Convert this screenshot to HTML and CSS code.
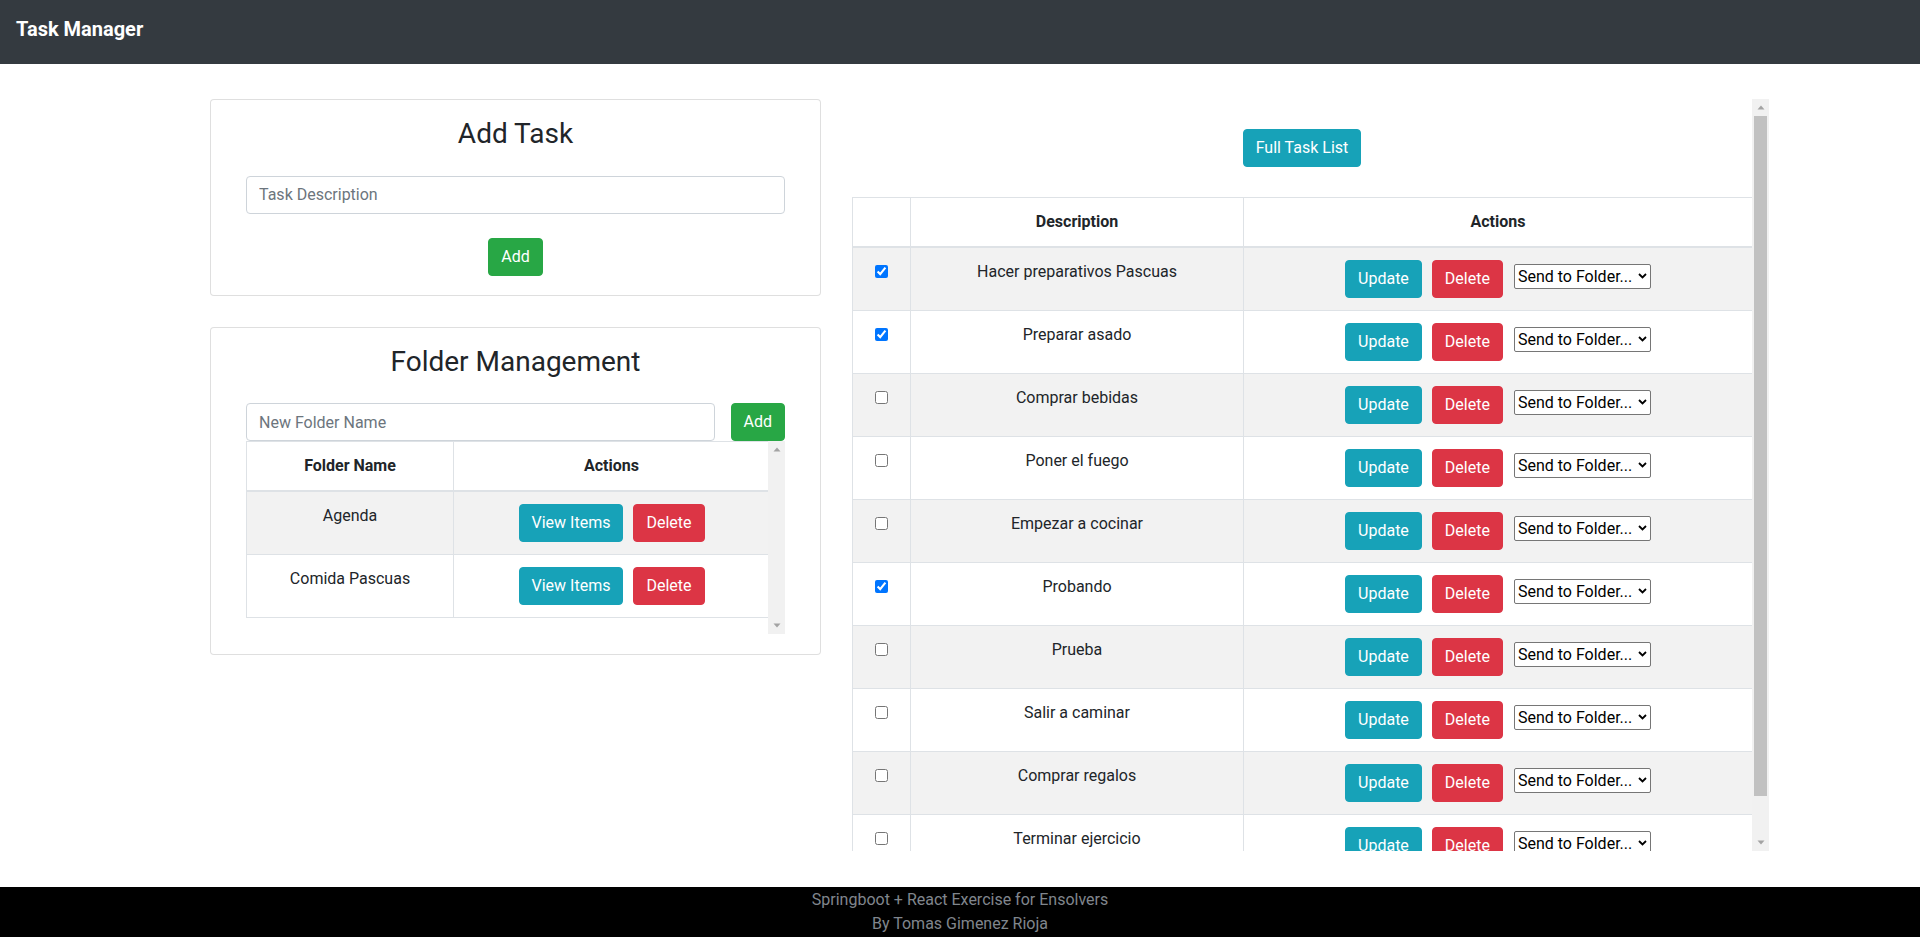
FILE: index.html
```html
<!DOCTYPE html>
<html lang="en">
<head>
<meta charset="utf-8">
<title>Task Manager</title>
<link rel="stylesheet" href="styles.css">
</head>
<body>
<nav class="navbar"><span class="brand">Task Manager</span></nav>

<main class="main">
  <div class="left-col">
    <section class="card">
      <h3 class="card-title">Add Task</h3>
      <input class="form-control" type="text" placeholder="Task Description">
      <div class="center-row"><button class="btn btn-success">Add</button></div>
    </section>

    <section class="card card-folders">
      <h3 class="card-title">Folder Management</h3>
      <div class="folder-form">
        <input class="form-control" type="text" placeholder="New Folder Name">
        <button class="btn btn-success">Add</button>
      </div>
      <div class="scroll-frame">
        <div class="scroll-content">
          <table class="table">
            <colgroup><col class="fcol-name"><col class="fcol-actions"></colgroup>
            <thead>
              <tr><th>Folder Name</th><th>Actions</th></tr>
            </thead>
            <tbody>
              <tr>
                <td>Agenda</td>
                <td><div class="actions"><button class="btn btn-info">View Items</button><button class="btn btn-danger">Delete</button></div></td>
              </tr>
              <tr>
                <td>Comida Pascuas</td>
                <td><div class="actions"><button class="btn btn-info">View Items</button><button class="btn btn-danger">Delete</button></div></td>
              </tr>
            </tbody>
          </table>
        </div>
        <div class="vscroll">
          <span class="sb-btn"><svg width="8" height="5" viewBox="0 0 8 5"><path d="M4 0.5L7.5 4.5H0.5Z" fill="#a3a3a3"/></svg></span>
          <span class="sb-track"></span>
          <span class="sb-btn"><svg width="8" height="5" viewBox="0 0 8 5"><path d="M4 4.5L7.5 0.5H0.5Z" fill="#a3a3a3"/></svg></span>
        </div>
      </div>
    </section>
  </div>

  <div class="right-col scroll-frame">
    <div class="scroll-content">
      <div class="list-head"><button class="btn btn-info">Full Task List</button></div>
      <table class="table">
        <colgroup><col class="tcol-check"><col class="tcol-desc"><col class="tcol-actions"></colgroup>
        <thead>
          <tr><th></th><th>Description</th><th>Actions</th></tr>
        </thead>
        <tbody>
          <tr>
            <td><input class="chk" type="checkbox" checked></td>
            <td>Hacer preparativos Pascuas</td>
            <td><div class="actions"><button class="btn btn-info">Update</button><button class="btn btn-danger">Delete</button><span class="select-wrap"><select class="folder-select"><option>Send to Folder...</option><option>Agenda</option><option>Comida Pascuas</option></select><svg class="chev" width="9" height="6" viewBox="0 0 9 6"><path d="M1 1L4.5 4.5L8 1" fill="none" stroke="#000" stroke-width="1.8"/></svg></span></div></td>
          </tr>
          <tr>
            <td><input class="chk" type="checkbox" checked></td>
            <td>Preparar asado</td>
            <td><div class="actions"><button class="btn btn-info">Update</button><button class="btn btn-danger">Delete</button><span class="select-wrap"><select class="folder-select"><option>Send to Folder...</option><option>Agenda</option><option>Comida Pascuas</option></select><svg class="chev" width="9" height="6" viewBox="0 0 9 6"><path d="M1 1L4.5 4.5L8 1" fill="none" stroke="#000" stroke-width="1.8"/></svg></span></div></td>
          </tr>
          <tr>
            <td><input class="chk" type="checkbox"></td>
            <td>Comprar bebidas</td>
            <td><div class="actions"><button class="btn btn-info">Update</button><button class="btn btn-danger">Delete</button><span class="select-wrap"><select class="folder-select"><option>Send to Folder...</option><option>Agenda</option><option>Comida Pascuas</option></select><svg class="chev" width="9" height="6" viewBox="0 0 9 6"><path d="M1 1L4.5 4.5L8 1" fill="none" stroke="#000" stroke-width="1.8"/></svg></span></div></td>
          </tr>
          <tr>
            <td><input class="chk" type="checkbox"></td>
            <td>Poner el fuego</td>
            <td><div class="actions"><button class="btn btn-info">Update</button><button class="btn btn-danger">Delete</button><span class="select-wrap"><select class="folder-select"><option>Send to Folder...</option><option>Agenda</option><option>Comida Pascuas</option></select><svg class="chev" width="9" height="6" viewBox="0 0 9 6"><path d="M1 1L4.5 4.5L8 1" fill="none" stroke="#000" stroke-width="1.8"/></svg></span></div></td>
          </tr>
          <tr>
            <td><input class="chk" type="checkbox"></td>
            <td>Empezar a cocinar</td>
            <td><div class="actions"><button class="btn btn-info">Update</button><button class="btn btn-danger">Delete</button><span class="select-wrap"><select class="folder-select"><option>Send to Folder...</option><option>Agenda</option><option>Comida Pascuas</option></select><svg class="chev" width="9" height="6" viewBox="0 0 9 6"><path d="M1 1L4.5 4.5L8 1" fill="none" stroke="#000" stroke-width="1.8"/></svg></span></div></td>
          </tr>
          <tr>
            <td><input class="chk" type="checkbox" checked></td>
            <td>Probando</td>
            <td><div class="actions"><button class="btn btn-info">Update</button><button class="btn btn-danger">Delete</button><span class="select-wrap"><select class="folder-select"><option>Send to Folder...</option><option>Agenda</option><option>Comida Pascuas</option></select><svg class="chev" width="9" height="6" viewBox="0 0 9 6"><path d="M1 1L4.5 4.5L8 1" fill="none" stroke="#000" stroke-width="1.8"/></svg></span></div></td>
          </tr>
          <tr>
            <td><input class="chk" type="checkbox"></td>
            <td>Prueba</td>
            <td><div class="actions"><button class="btn btn-info">Update</button><button class="btn btn-danger">Delete</button><span class="select-wrap"><select class="folder-select"><option>Send to Folder...</option><option>Agenda</option><option>Comida Pascuas</option></select><svg class="chev" width="9" height="6" viewBox="0 0 9 6"><path d="M1 1L4.5 4.5L8 1" fill="none" stroke="#000" stroke-width="1.8"/></svg></span></div></td>
          </tr>
          <tr>
            <td><input class="chk" type="checkbox"></td>
            <td>Salir a caminar</td>
            <td><div class="actions"><button class="btn btn-info">Update</button><button class="btn btn-danger">Delete</button><span class="select-wrap"><select class="folder-select"><option>Send to Folder...</option><option>Agenda</option><option>Comida Pascuas</option></select><svg class="chev" width="9" height="6" viewBox="0 0 9 6"><path d="M1 1L4.5 4.5L8 1" fill="none" stroke="#000" stroke-width="1.8"/></svg></span></div></td>
          </tr>
          <tr>
            <td><input class="chk" type="checkbox"></td>
            <td>Comprar regalos</td>
            <td><div class="actions"><button class="btn btn-info">Update</button><button class="btn btn-danger">Delete</button><span class="select-wrap"><select class="folder-select"><option>Send to Folder...</option><option>Agenda</option><option>Comida Pascuas</option></select><svg class="chev" width="9" height="6" viewBox="0 0 9 6"><path d="M1 1L4.5 4.5L8 1" fill="none" stroke="#000" stroke-width="1.8"/></svg></span></div></td>
          </tr>
          <tr>
            <td><input class="chk" type="checkbox"></td>
            <td>Terminar ejercicio</td>
            <td><div class="actions"><button class="btn btn-info">Update</button><button class="btn btn-danger">Delete</button><span class="select-wrap"><select class="folder-select"><option>Send to Folder...</option><option>Agenda</option><option>Comida Pascuas</option></select><svg class="chev" width="9" height="6" viewBox="0 0 9 6"><path d="M1 1L4.5 4.5L8 1" fill="none" stroke="#000" stroke-width="1.8"/></svg></span></div></td>
          </tr>
        </tbody>
      </table>
    </div>
    <div class="vscroll">
      <span class="sb-btn"><svg width="8" height="5" viewBox="0 0 8 5"><path d="M4 0.5L7.5 4.5H0.5Z" fill="#a3a3a3"/></svg></span>
      <span class="sb-track"><span class="sb-thumb"></span></span>
      <span class="sb-btn"><svg width="8" height="5" viewBox="0 0 8 5"><path d="M4 4.5L7.5 0.5H0.5Z" fill="#a3a3a3"/></svg></span>
    </div>
  </div>
</main>

<footer class="footer">
  <div>Springboot + React Exercise for Ensolvers</div>
  <div>By Tomas Gimenez Rioja</div>
</footer>
</body>
</html>
```

FILE: styles.css
```css
* { box-sizing: border-box; }

html, body { height: 100%; }

body {
  margin: 0;
  height: 100vh;
  display: flex;
  flex-direction: column;
  font-family: "Segoe UI", Roboto, "Liberation Sans", sans-serif;
  font-size: 16px;
  line-height: 1.5;
  color: #212529;
  background: #fff;
  overflow: hidden;
}

/* ---------- navbar ---------- */
.navbar {
  flex: 0 0 64px;
  height: 64px;
  background: #343a40;
  padding: 14px 16px 0;
}
.brand {
  display: block;
  font-size: 20px;
  line-height: 30px;
  font-weight: 700;
  color: #fff;
}

/* ---------- layout ---------- */
.main {
  flex: 1 1 auto;
  display: flex;
  align-items: flex-start;
  gap: 31px;
  padding: 35px 0 0 210px;
  min-height: 0;
}
.left-col {
  width: 611px;
  flex: 0 0 611px;
}
.right-col {
  width: 917px;
  flex: 0 0 917px;
  height: 752px;
}

/* ---------- cards ---------- */
.card {
  border: 1px solid rgba(0, 0, 0, 0.125);
  border-radius: 4px;
  background: #fff;
  padding: 17px 35px 19px;
}
.card-folders {
  margin-top: 31px;
  padding-bottom: 20px;
}
.card-title {
  margin: 0 0 25px;
  font-size: 28px;
  line-height: 1.2;
  font-weight: 400;
  text-align: center;
  color: #212529;
}
.center-row {
  margin-top: 24px;
  text-align: center;
}

/* ---------- forms ---------- */
.form-control {
  display: block;
  width: 100%;
  height: 38px;
  padding: 6px 12px;
  font-family: inherit;
  font-size: 16px;
  line-height: 24px;
  color: #495057;
  background: #fff;
  border: 1px solid #ced4da;
  border-radius: 4px;
}
.form-control::placeholder { color: #6c757d; opacity: 1; }

.folder-form {
  display: flex;
  gap: 16px;
}
.folder-form .form-control { flex: 1 1 auto; width: auto; }
.folder-form .btn { flex: 0 0 auto; }

/* ---------- buttons ---------- */
.btn {
  display: inline-block;
  font-family: inherit;
  font-size: 16px;
  line-height: 24px;
  font-weight: 400;
  padding: 6px 12px;
  border: 1px solid transparent;
  border-radius: 4px;
  color: #fff;
  cursor: pointer;
  white-space: nowrap;
}
.btn-success { background: #28a745; border-color: #28a745; }
.btn-info { background: #17a2b8; border-color: #17a2b8; }
.btn-danger { background: #dc3545; border-color: #dc3545; }

/* ---------- tables ---------- */
.table {
  width: 100%;
  table-layout: fixed;
  border-collapse: collapse;
  margin-bottom: 16px;
  color: #212529;
}
.table th,
.table td {
  padding: 12px;
  border: 1px solid #dee2e6;
  vertical-align: top;
  text-align: center;
}
.table th { font-weight: 700; }
.table thead th { border-bottom: 2px solid #dee2e6; }
.table tbody tr:nth-child(odd) { background: #f2f2f2; }

.fcol-name { width: 207px; }
.fcol-actions { width: 316px; }
.tcol-check { width: 58px; }
.tcol-desc { width: 333px; }
.tcol-actions { width: 509px; }

.actions {
  display: flex;
  justify-content: center;
  align-items: flex-start;
  gap: 10px;
}
.select-wrap {
  position: relative;
  display: block;
  margin-top: 4px;
  margin-left: 1px;
  height: 25px;
}
.folder-select {
  display: block;
  -webkit-appearance: none;
  appearance: none;
  width: 137px;
  height: 25px;
  font-family: inherit;
  font-size: 16px;
  line-height: 23px;
  color: #000;
  background: #fff;
  border: 1px solid #767676;
  border-radius: 2px;
  padding: 0 16px 0 3px;
}
.chev {
  position: absolute;
  right: 4px;
  top: 9px;
  pointer-events: none;
}
.chk {
  display: block;
  width: 13px;
  height: 13px;
  margin: 5px auto 0;
}

.list-head {
  padding: 30px 0;
  text-align: center;
}

/* ---------- scroll areas with drawn scrollbars ---------- */
.scroll-frame {
  display: flex;
}
.scroll-content {
  flex: 1 1 auto;
  min-width: 0;
  overflow-y: auto;
}
.vscroll {
  flex: 0 0 17px;
  width: 17px;
  display: flex;
  flex-direction: column;
  background: #f1f1f1;
}
.sb-btn {
  flex: 0 0 17px;
  height: 17px;
  display: flex;
  align-items: center;
  justify-content: center;
}
.sb-btn svg { display: block; }
.sb-track {
  flex: 1 1 auto;
  display: block;
}
.sb-thumb {
  display: block;
  height: 680px;
  margin: 0 2px;
  background: #c1c1c1;
}

/* ---------- footer ---------- */
.footer {
  flex: 0 0 50px;
  background: #000;
  color: #80868d;
  text-align: center;
  padding: 1px 0;
  line-height: 24px;
}
```
